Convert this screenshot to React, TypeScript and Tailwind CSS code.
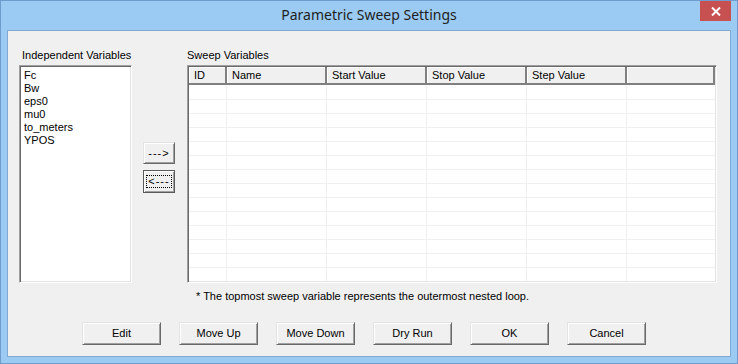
import React from 'react';

const variables = ['Fc', 'Bw', 'eps0', 'mu0', 'to_meters', 'YPOS'];

const columns = [
  { label: 'ID', width: 'w-[38px]' },
  { label: 'Name', width: 'w-[100px]' },
  { label: 'Start Value', width: 'w-[100px]' },
  { label: 'Stop Value', width: 'w-[100px]' },
  { label: 'Step Value', width: 'w-[100px]' },
  { label: '', width: 'flex-1' },
];

const raised =
  'border border-t-[#e3e3e3] border-l-[#e3e3e3] border-r-[#696969] border-b-[#696969] bg-[#f0f0f0] shadow-[inset_1px_1px_0_#ffffff,inset_-1px_-1px_0_#a0a0a0]';

const sunken =
  'border border-t-[#a0a0a0] border-l-[#a0a0a0] border-r-white border-b-white shadow-[inset_1px_1px_0_#696969,inset_-1px_-1px_0_#e3e3e3]';

function Button({ label }: { label: string }) {
  return (
    <button className={`w-[79px] h-[23px] flex items-center justify-center text-[11px] text-black ${raised}`}>
      {label}
    </button>
  );
}

export default function App() {
  const rows = Array.from({ length: 14 });

  return (
    <div className="w-[738px] h-[364px] flex flex-col bg-[#9bcbf2] border border-[#6f9ccb] font-['Liberation_Sans',Arial,sans-serif] text-black select-none">
      {/* title bar */}
      <div className="relative h-[29px] flex items-center justify-center">
        <span className="text-[14px] font-['Noto_Sans',sans-serif] leading-none pb-[1px] text-[#1e1e1e]">
          Parametric Sweep Settings
        </span>
        <div className="absolute right-[6px] top-0 w-[31px] h-[20px] bg-[#c75050] flex items-center justify-center">
          <svg width="10" height="9" viewBox="0 0 10 9">
            <path d="M1 0.5 L9 8.5 M9 0.5 L1 8.5" stroke="white" strokeWidth="2" />
          </svg>
        </div>
      </div>

      {/* client area */}
      <div className="mx-[6px] mb-[6px] flex-1 bg-[#f0f0f0] border border-[#82a9d3] flex flex-col text-[11px]">
        <div className="flex pl-[11px] pt-[18px]">
          {/* independent variables */}
          <div className="w-[113px] flex flex-col">
            <div className="h-[16px] pl-[3px] leading-[13px]">Independent Variables</div>
            <div className={`h-[218px] bg-white pt-[3px] pl-[3px] ${sunken}`}>
              {variables.map((v) => (
                <div key={v} className="h-[13px] leading-[13px] pl-[1px]">
                  {v}
                </div>
              ))}
            </div>
          </div>

          {/* arrow buttons */}
          <div className="w-[32px] ml-[11px] mt-[93px] flex flex-col gap-[6px]">
            <button className={`h-[22px] w-[32px] flex items-center justify-center text-[11px] tracking-[1px] ${raised}`}>
              ---&gt;
            </button>
            <button className="h-[23px] w-[32px] border border-[#5a5a5a] p-0">
              <div className={`h-full w-full flex items-center justify-center text-[11px] ${raised} border-0`}>
                <span className="border border-dotted border-black px-[1px] tracking-[1px] leading-[11px] h-[13px] flex items-center">
                  &lt;---
                </span>
              </div>
            </button>
          </div>

          {/* sweep variables */}
          <div className="w-[530px] ml-[12px] flex flex-col">
            <div className="h-[16px] leading-[13px]">Sweep Variables</div>
            <div className={`h-[218px] bg-white flex flex-col ${sunken} p-[1px]`}>
              <div className="flex h-[18px] shrink-0">
                {columns.map((c, i) => (
                  <div
                    key={i}
                    className={`${c.width} h-full pl-[5px] flex items-center bg-[#f0f0f0] border-r-2 border-b-2 border-r-[#808080] border-b-[#808080] shadow-[inset_1px_1px_0_#ffffff]`}
                  >
                    {c.label}
                  </div>
                ))}
              </div>
              <div className="flex flex-col overflow-hidden pt-[1px]">
                {rows.map((_, r) => (
                  <div key={r} className="flex h-[14px] shrink-0 border-b border-[#f0f0f0]">
                    {columns.map((c, i) => (
                      <div
                        key={i}
                        className={`${c.width} h-full ${i < columns.length - 1 ? 'border-r border-[#f0f0f0]' : ''}`}
                      />
                    ))}
                  </div>
                ))}
              </div>
            </div>
          </div>
        </div>

        <div className="pl-[188px] pt-[7px] h-[24px] leading-[13px]">
          * The topmost sweep variable represents the outermost nested loop.
        </div>

        <div className="flex pl-[74px] pt-[15px] gap-[18px]">
          <Button label="Edit" />
          <Button label="Move Up" />
          <Button label="Move Down" />
          <Button label="Dry Run" />
          <Button label="OK" />
          <Button label="Cancel" />
        </div>
      </div>
    </div>
  );
}
